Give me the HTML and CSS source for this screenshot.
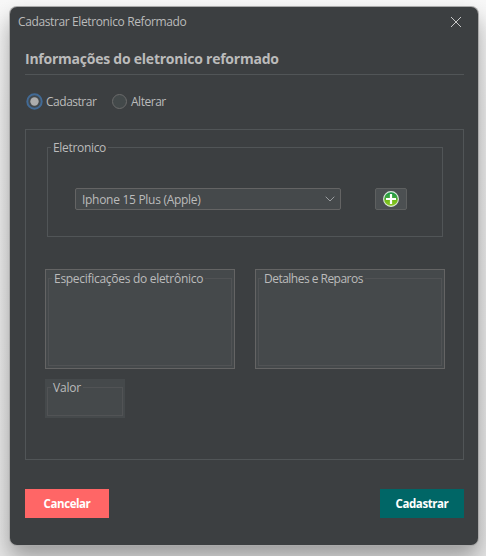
FILE: index.html
```
<!DOCTYPE html>
<html lang="pt-BR">
<head>
<meta charset="utf-8">
<title>Cadastrar Eletronico Reformado</title>
<link rel="stylesheet" href="styles.css">
</head>
<body>
<main class="window">
  <header class="titlebar">
    <span class="caption">Cadastrar Eletronico Reformado</span>
    <svg class="close" width="12" height="12" viewBox="0 0 12 12"><path d="M1 1L11 11M11 1L1 11"/></svg>
  </header>
  <h1 class="heading">Informações do eletronico reformado</h1>
  <div class="radios">
    <svg class="radio" width="17" height="17" viewBox="0 0 17 17"><circle cx="8.5" cy="8.5" r="7.2" fill="#43494d" stroke="#426a95" stroke-width="2"/><circle cx="8.5" cy="8.5" r="4.2" fill="#adadad"/></svg>
    <span class="radio-label first">Cadastrar</span>
    <svg class="radio" width="17" height="17" viewBox="0 0 17 17"><circle cx="8.5" cy="8.5" r="7" fill="#43494a" stroke="#6b6b6b"/></svg>
    <span class="radio-label second">Alterar</span>
  </div>
  <section class="panel">
    <fieldset class="group device">
      <legend class="t-eletronico">Eletronico</legend>
      <div class="device-row">
        <div class="combo">
          <span class="combo-text">Iphone 15 Plus (Apple)</span>
          <svg width="10" height="6" viewBox="0 0 10 6"><path d="M.7.7L5 5L9.3.7"/></svg>
        </div>
        <div class="add">
          <svg width="16" height="16" viewBox="0 0 16 16">
            <defs><linearGradient id="green" x1="0" y1="0" x2="0" y2="1"><stop offset="0" stop-color="#129447"/><stop offset=".45" stop-color="#45a83c"/><stop offset=".6" stop-color="#72bc18"/><stop offset="1" stop-color="#8fca28"/></linearGradient></defs>
            <circle cx="8" cy="8" r="7.4" fill="url(#green)" stroke="#dce8dc" stroke-width="1.1"/>
            <path d="M8 3V13M3 8H13" stroke="#fff" stroke-width="2.2"/>
          </svg>
        </div>
      </div>
    </fieldset>
    <div class="areas">
      <div class="area"><fieldset class="group"><legend class="t-espec">Especificações do eletrônico</legend></fieldset></div>
      <div class="area"><fieldset class="group"><legend class="t-det">Detalhes e Reparos</legend></fieldset></div>
    </div>
    <div class="value"><fieldset class="group"><legend>Valor</legend></fieldset></div>
  </section>
  <footer class="actions">
    <div class="btn cancel">Cancelar</div>
    <div class="btn submit">Cadastrar</div>
  </footer>
</main>
</body>
</html>
```
FILE: styles.css
```
* { box-sizing: border-box; }
html { background: #eee; }
body {
  margin: 0;
  width: 486px;
  height: 556px;
  padding: 7px 0 0 10px;
  overflow: hidden;
  background: linear-gradient(#f8f8f8, #eee 20%, #e6e6e6);
  font: 12px/17px "Open Sans", "Noto Sans", sans-serif;
  letter-spacing: -.18px;
  color: #bbb;
}
.window {
  width: 468px;
  height: 538px;
  padding: 0 14px 0 15px;
  display: flex;
  flex-direction: column;
  background: #3c3f41;
  border-radius: 7px;
  box-shadow: 0 0 0 1px #aaa, 0 12px 22px rgba(0, 0, 0, .34);
}
.titlebar {
  height: 29px;
  margin: 0 2px 0 -7px;
  display: flex;
  align-items: center;
  justify-content: space-between;
}
.caption { letter-spacing: -.38px; }
.close { stroke: #c8c8c8; fill: none; stroke-width: 1; }
.heading {
  margin: 0;
  height: 39px;
  padding-top: 13px;
  border-bottom: 1px solid #515557;
  font-size: 14px;
  line-height: 19px;
  letter-spacing: -.24px;
}
.radios {
  height: 53px;
  margin-bottom: 1px;
  display: flex;
  align-items: center;
  padding-left: 1px;
}
.radio-label { margin-left: 3px; letter-spacing: -.48px; }
.radio-label.first { width: 65px; }
.panel {
  height: 331px;
  border: 1px solid #515557;
  padding: 9px 18px 0 19px;
}
.group {
  margin: 0;
  padding: 0 3px;
  min-width: 0;
  border: 1px solid #515557;
}
legend { height: 17px; padding: 0 2px; white-space: nowrap; }
.t-eletronico { letter-spacing: -.32px; }
.t-espec { letter-spacing: -.29px; }
.t-det { letter-spacing: -.52px; }
.device { height: 98px; margin: 0 2px; }
.device-row { display: flex; gap: 34px; margin: 32px 0 0 24px; }
.combo {
  width: 266px;
  height: 22px;
  display: flex;
  align-items: center;
  justify-content: space-between;
  padding: 0 5px 0 6px;
  background: #45494b;
  border: 1px solid #646464;
  border-radius: 2px;
}
.combo-text { letter-spacing: -.29px; }
.combo svg { fill: none; stroke: #9a9da0; }
.add {
  width: 32px;
  height: 22px;
  display: flex;
  align-items: center;
  justify-content: center;
  background: #4c5052;
  border: 1px solid #5e6060;
  border-radius: 2px;
}
.areas { display: flex; gap: 20px; margin-top: 32px; }
.area {
  width: 190px;
  height: 100px;
  padding: 0 2px 2px;
  background: #45494b;
  border: 1px solid #646464;
}
.area .group, .value .group { height: 100%; border-color: #515355; }
.value {
  width: 80px;
  height: 39px;
  margin-top: 10px;
  padding: 0 2px 2px;
  background: #45494b;
}
.actions { display: flex; justify-content: space-between; margin-top: 29px; }
.btn {
  width: 84px;
  height: 29px;
  line-height: 29px;
  text-align: center;
  font-size: 11.5px;
  font-weight: 700;
  color: #fff;
  letter-spacing: -.42px;
}
.cancel { background: #f66; }
.submit { background: #066; }
```
